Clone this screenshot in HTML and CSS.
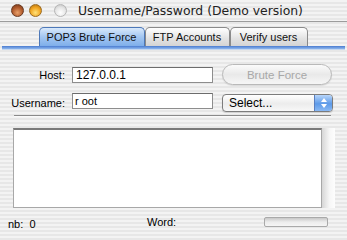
FILE: index.html
```html
<!DOCTYPE html>
<html lang="en">

<head>
    <meta charset="UTF-8">
    <meta name="viewport" content="width=device-width, initial-scale=1.0">
    <title>Username/Password (Demo version)</title>
    <link rel="stylesheet" href="styles.css">
</head>

<body>
    <div class="ventana">
        <div class="barra-titulo">
            <div class="botones">
                <span class="boton cerrar"></span>
                <span class="boton minimizar"></span>
                <span class="boton zoom"></span>
            </div>
            <div class="titulo">Username/Password (Demo version)</div>
        </div>

        <div class="pestanas">
            <div class="pestana activa">POP3 Brute Force</div>
            <div class="pestana">FTP Accounts</div>
            <div class="pestana">Verify users</div>
        </div>
        <div class="linea-azul"></div>

        <div class="formulario">
            <label for="host">Host:</label>
            <input type="text" id="host" class="campo" value="127.0.0.1">
            <button class="boton-pastilla" disabled>Brute Force</button>

            <label for="usuario">Username:</label>
            <input type="text" id="usuario" class="campo campo-usuario" value="r oot">
            <div class="selector">
                <span>Select...</span>
                <span class="flechas">
                    <svg width="6" height="10" viewBox="0 0 6 10">
                        <path d="M0 4 L3 0 L6 4 Z" fill="#ffffff" />
                        <path d="M0 6 L3 10 L6 6 Z" fill="#ffffff" />
                    </svg>
                </span>
            </div>
        </div>

        <div class="separador"></div>

        <div class="zona-texto">
            <div class="resultados"></div>
            <div class="sombra"></div>
        </div>

        <div class="pie">
            <span class="contador">nb:&nbsp; 0</span>
            <span class="palabra">Word:</span>
            <span class="progreso"></span>
        </div>
    </div>
</body>

</html>
```

FILE: styles.css
```css
body {
    font-family: "Liberation Sans", Arial, sans-serif;
    margin: 0;
    padding: 0;
    font-size: 11px;
    color: #000000;
}

.ventana {
    width: 347px;
    height: 240px;
    overflow: hidden;
    background: repeating-linear-gradient(to bottom, #f3f3f3 0, #f3f3f3 2px, #e7e7e7 2px, #e7e7e7 4px);
}

.barra-titulo {
    height: 22px;
    display: flex;
    align-items: center;
    border-bottom: 1px solid #9c9c9c;
    box-sizing: border-box;
}

.botones {
    display: flex;
    gap: 5px;
    padding-left: 11px;
}

.boton {
    width: 13px;
    height: 13px;
    border-radius: 50%;
    box-sizing: border-box;
}

.cerrar {
    background: radial-gradient(circle at 50% 70%, #e9a06a 0, #b05a2c 55%, #6e3418 100%);
    border: 1px solid #6a3a22;
}

.minimizar {
    background: radial-gradient(circle at 50% 70%, #ffe27a 0, #f0a420 55%, #a86a10 100%);
    border: 1px solid #9a6a20;
}

.zoom {
    margin-left: 7px;
    background: radial-gradient(circle at 50% 70%, #ffffff 0, #e6e6e6 55%, #bdbdbd 100%);
    border: 1px solid #b5b5b5;
}

.titulo {
    margin-left: 11px;
    font-family: "DejaVu Sans", sans-serif;
    font-size: 12.4px;
    color: #222222;
    white-space: nowrap;
}

.pestanas {
    display: flex;
    justify-content: center;
    margin-top: 5px;
    padding-right: 1px;
}

.pestana {
    height: 19px;
    line-height: 18px;
    padding: 0;
    box-sizing: border-box;
    border: 1px solid #8a8a8a;
    border-bottom: none;
    border-radius: 5px 5px 0 0;
    background: linear-gradient(to bottom, #ffffff, #e2e2e2 60%, #d4d4d4);
    color: #111111;
    white-space: nowrap;
    text-align: center;
}

.pestana.activa {
    width: 106px;
    background: linear-gradient(to bottom, #d9e9fb, #a7c9f2 45%, #7eaeea);
    border-color: #4d78b8;
}

.pestana:nth-child(2) {
    width: 85px;
}

.pestana:nth-child(3) {
    width: 78px;
}

.linea-azul {
    height: 3px;
    margin: 0 2px;
    background: linear-gradient(to bottom, #4a7bd0, #8fb8ee);
    border-bottom: 1px solid #c6d8f0;
}

.formulario {
    display: grid;
    grid-template-columns: 72px 150px 112px;
    grid-template-rows: 21px 19px;
    row-gap: 8px;
    align-items: center;
    margin-top: 14px;
}

.formulario label {
    text-align: right;
    padding-right: 7px;
}

.campo {
    width: 141px;
    height: 16px;
    padding: 0 3px;
    margin: 0;
    border: 1px solid #8d8d8d;
    border-top-color: #6c6c6c;
    box-sizing: border-box;
    font-family: "Liberation Sans", Arial, sans-serif;
    font-size: 12px;
    background: #ffffff;
}

.campo-usuario {
    font-size: 11px;
    padding-left: 2px;
    align-self: start;
}

.boton-pastilla {
    width: 110px;
    height: 21px;
    border: 1px solid #b9b9b9;
    border-radius: 11px;
    background: linear-gradient(to bottom, #fbfbfb, #e9e9e9 50%, #f6f6f6);
    color: #a8a8a8;
    font-family: "Liberation Sans", Arial, sans-serif;
    font-size: 11.5px;
    padding: 0;
    box-shadow: 0 1px 1px rgba(0, 0, 0, 0.1);
}

.selector {
    width: 111px;
    height: 18px;
    display: flex;
    align-items: center;
    justify-content: space-between;
    border: 1px solid #7c7c7c;
    border-radius: 4px;
    box-sizing: border-box;
    background: linear-gradient(to bottom, #ffffff, #ececec 55%, #f8f8f8);
    font-size: 12px;
    padding-left: 6px;
    overflow: hidden;
    box-shadow: 0 1px 1px rgba(0, 0, 0, 0.15);
}

.flechas {
    width: 17px;
    height: 16px;
    display: flex;
    align-items: center;
    justify-content: center;
    background: linear-gradient(to bottom, #b8d6fb, #5d9ae8 55%, #8ab9f4);
    border-left: 1px solid #5a7fbf;
}

.separador {
    height: 1px;
    margin: 3px 16px 0 14px;
    background-color: #8a8a8a;
    border-bottom: 1px solid #fafafa;
}

.zona-texto {
    display: flex;
    margin: 11px 0 0 13px;
}

.resultados {
    width: 309px;
    height: 80px;
    box-sizing: border-box;
    background-color: #ffffff;
    border: 1px solid #a8a8a8;
    border-top: 2px solid #7a7a7a;
}

.sombra {
    width: 13px;
    height: 80px;
    background: linear-gradient(to right, #d6d6d6, #f7f7f7 60%, #fdfdfd);
}

.pie {
    display: flex;
    align-items: center;
    margin-top: 8px;
    height: 12px;
}

.contador {
    width: 139px;
    padding-left: 8px;
    margin-top: 4px;
}

.palabra {
    width: 117px;
}

.progreso {
    width: 64px;
    height: 10px;
    box-sizing: border-box;
    border: 1px solid #a9a9a9;
    border-radius: 2px;
    background: linear-gradient(to bottom, #c8c8c8, #ececec 50%, #f5f5f5);
}
```
